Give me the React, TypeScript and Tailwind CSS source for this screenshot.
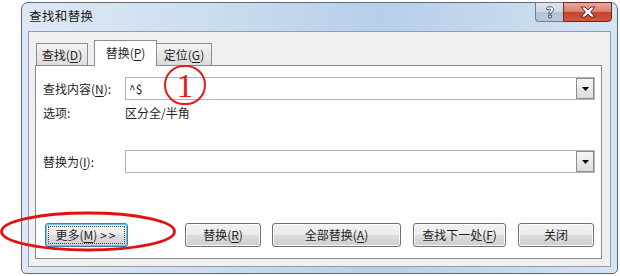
import React from "react";

const font = { fontFamily: '"Noto Sans CJK SC", "Noto Sans", sans-serif' };

function U({ c }: { c: string }) {
  return <span className="underline underline-offset-2">{c}</span>;
}

function Btn({ children, w, focus }: { children: React.ReactNode; w: string; focus?: boolean }) {
  return (
    <div
      className={`${w} h-[24px] rounded-[3px] border flex items-center justify-center text-[12px] text-[#1e1e1e] ${
        focus
          ? "border-[#3c7fb1] shadow-[inset_0_0_0_1px_#6fc3f0] bg-[linear-gradient(#f4f4f4_0%,#ececec_50%,#dedede_50%,#d2d2d2_100%)] p-[2px]"
          : "border-[#707070] shadow-[inset_0_0_0_1px_#fbfbfb] bg-[linear-gradient(#f2f2f2_0%,#ebebeb_50%,#dddddd_50%,#cfcfcf_100%)]"
      }`}
    >
      {focus ? (
        <div className="w-full h-full border border-dotted border-[#444] flex items-center justify-center">{children}</div>
      ) : (
        children
      )}
    </div>
  );
}

function Combo({ text }: { text?: string }) {
  return (
    <div className="flex-1 h-[23px] border border-[#b3b5bb] bg-white flex items-center">
      <div className="flex-1 pl-[3px] text-[12px] text-[#1e1e1e] leading-none">{text}</div>
      <div className="w-[18px] h-[21px] border border-[#8c8c8c] bg-[linear-gradient(#f6f6f6,#dcdcdc)] flex items-center justify-center">
        <svg width="7" height="4" viewBox="0 0 7 4">
          <path d="M0 0 H7 L3.5 4 Z" fill="#000" />
        </svg>
      </div>
    </div>
  );
}

export default function App() {
  return (
    <div className="w-[620px] h-[276px] bg-white relative overflow-hidden" style={font}>
      <div className="ml-[21px] mt-[2px] w-[597px] h-[272px] rounded-t-[7px] rounded-b-[5px] border border-[#5d6a79] bg-[linear-gradient(90deg,#dfe9f5_0%,#c9dcef_35%,#b7cfe9_60%,#c8dbef_85%,#d6e4f3_100%)] flex flex-col">
        <div className="h-[28px] flex items-start relative">
          <div className="pl-[7px] pt-[4px] text-[12.5px] tracking-[0.4px] text-[#1a1a1a]">查找和替换</div>
          <div className="ml-auto mr-[5px] flex -mt-px">
            <div className="w-[28px] h-[20px] rounded-bl-[4px] border border-[#6d7d8e] border-r-0 bg-[linear-gradient(#dde5ee_0%,#cdd8e4_50%,#b4c3d3_50%,#bac9d8_100%)] flex items-center justify-center">
              <svg width="10" height="13" viewBox="0 0 10 13">
                <path
                  d="M1.5 3.5 C1.5 1.5 3 0.8 5 0.8 C7.2 0.8 8.5 2 8.5 3.6 C8.5 5.4 6.3 5.8 6.3 7.8 H3.7 C3.7 5.3 5.8 5 5.8 3.8 C5.8 3.2 5.4 2.9 5 2.9 C4.4 2.9 4.1 3.3 4.1 3.9 Z M3.7 9.2 H6.3 V11.8 H3.7 Z"
                  fill="#fff"
                  stroke="#3b4654"
                  strokeWidth="0.9"
                />
              </svg>
            </div>
            <div className="w-[49px] h-[20px] rounded-br-[4px] border border-[#6b2a20] bg-[linear-gradient(#e9a99b_0%,#dc7d68_50%,#c7432b_50%,#d0573c_100%)] flex items-center justify-center">
              <svg width="16" height="12" viewBox="0 0 16 12">
                <path
                  d="M1 1 H5 L8 4 L11 1 H15 L10.5 6 L15 11 H11 L8 8 L5 11 H1 L5.5 6 Z"
                  fill="#fff"
                  stroke="#4a1c14"
                  strokeWidth="0.9"
                  strokeLinejoin="round"
                />
              </svg>
            </div>
          </div>
        </div>
        <div className="mx-[6px] h-[236px] border border-[#8e9db0] bg-[#f0f0f0] flex flex-col">
          <div className="flex items-end pl-[7px] pt-[7px] h-[33px] text-[12px] text-[#1e1e1e]">
            <div className="w-[52px] h-[22px] border border-b-0 border-[#898c95] bg-[linear-gradient(#f3f3f3,#dcdcdc)] flex items-center justify-center">
              查找(<U c="D" />)
            </div>
            <div className="ml-[6px] w-[63px] h-[26px] border border-b-0 border-[#898c95] bg-white relative z-10 -mb-px flex items-center justify-center pb-[2px]">
              替换(<U c="P" />)
            </div>
            <div className="-ml-px w-[56px] h-[22px] border border-b-0 border-[#898c95] bg-[linear-gradient(#f3f3f3,#dcdcdc)] flex items-center justify-center">
              定位(<U c="G" />)
            </div>
          </div>
          <div className="ml-[6px] w-[567px] h-[194px] border border-[#898c95] bg-white pl-[7px] pr-[6px] pt-[11px] flex flex-col text-[12px] text-[#1e1e1e]">
            <div className="h-[23px] flex items-center">
              <div className="w-[82px]">
                查找内容(<U c="N" />):
              </div>
              <Combo text="^$" />
            </div>
            <div className="mt-[5px] h-[16px] flex items-center">
              <div className="w-[82px]">选项:</div>
              <div>区分全/半角</div>
            </div>
            <div className="mt-[29px] h-[23px] flex items-center">
              <div className="w-[82px]">
                替换为(<U c="I" />):
              </div>
              <Combo />
            </div>
            <div className="mt-[50px] flex items-center pl-[2px]">
              <Btn w="w-[83px]" focus>
                <span>
                  更多(<U c="M" />) <span className="tracking-[2px]">&gt;&gt;</span>
                </span>
              </Btn>
              <div className="ml-[57px]">
                <Btn w="w-[76px]">
                  <span>
                    替换(<U c="R" />)
                  </span>
                </Btn>
              </div>
              <div className="ml-[11px]">
                <Btn w="w-[129px]">
                  <span>
                    全部替换(<U c="A" />)
                  </span>
                </Btn>
              </div>
              <div className="ml-[12px]">
                <Btn w="w-[93px]">
                  <span>
                    查找下一处(<U c="F" />)
                  </span>
                </Btn>
              </div>
              <div className="ml-[12px]">
                <Btn w="w-[76px]">
                  <span>关闭</span>
                </Btn>
              </div>
            </div>
          </div>
        </div>
      </div>
      <div
        className="absolute left-[164px] top-[65px] w-[42px] h-[40px] rounded-full border-2 border-[#e41b1b] flex items-center justify-center text-[33px] leading-none text-[#e41b1b] pt-[2px]"
        style={{ fontFamily: '"Liberation Serif", serif' }}
      >
        1
      </div>
      <svg className="absolute left-0 top-0" width="620" height="276" viewBox="0 0 620 276">
        <ellipse cx="88" cy="231.5" rx="86.5" ry="18.5" fill="none" stroke="#e41010" strokeWidth="2.8" />
      </svg>
    </div>
  );
}
